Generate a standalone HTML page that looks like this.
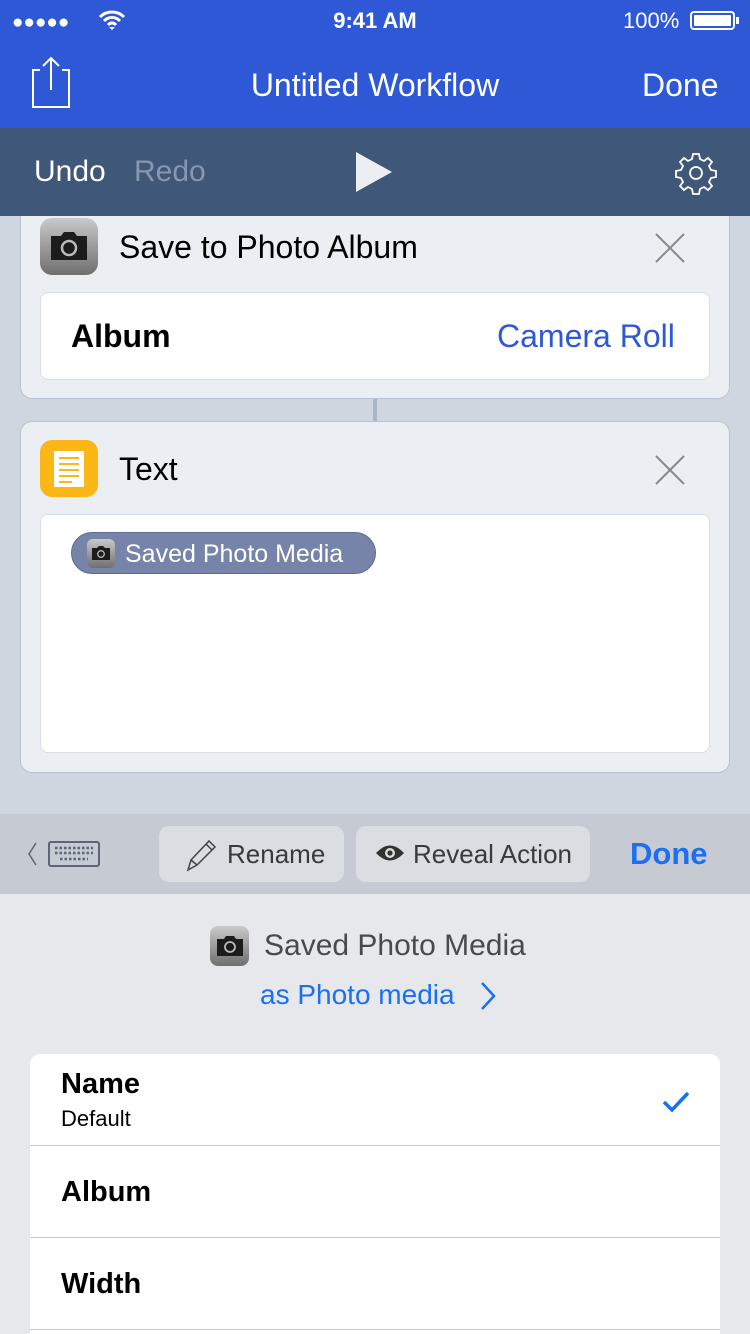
<!DOCTYPE html>
<html style="overflow:hidden;height:1334px"><head><meta charset="utf-8"><style>
*{margin:0;padding:0;box-sizing:border-box}
body{width:750px;height:1334px;overflow:hidden;font-family:"Liberation Sans",sans-serif;background:#cfd6e0;position:relative}
.a{position:absolute}
.camico{background:linear-gradient(#c9c9c9,#6f6f6f);border-radius:12px}
</style></head><body>
<div class="a" style="left:0;top:0;width:750px;height:128px;background:#2e58d6"></div>
<div class="a" style="left:12px;top:12px;color:#fff;font-size:19px;letter-spacing:0px">●●●●●</div>
<svg class="a" style="left:98px;top:10px" width="28" height="20" viewBox="0 0 28 20"><path d="M2 7a17 17 0 0 1 24 0M6 11a11 11 0 0 1 16 0M10 15a5 5 0 0 1 8 0" stroke="#fff" stroke-width="3" fill="none"/><path d="M11 17l3 3l3-3z" fill="#fff"/></svg>
<div class="a" style="left:0;width:750px;top:8px;text-align:center;color:#fff;font-size:22px;font-weight:bold">9:41 AM</div>
<div class="a" style="left:623px;top:8px;color:#fff;font-size:22px">100%</div>
<div class="a" style="left:690px;top:11px;width:45px;height:19px;border:2px solid #fff;border-radius:4px;padding:2px"><div style="background:#fff;width:100%;height:100%;border-radius:1px"></div></div>
<div class="a" style="left:736px;top:17px;width:3px;height:7px;background:#fff"></div>
<svg class="a" style="left:20px;top:55px" width="54" height="54" viewBox="0 0 54 54"><path d="M20 15H13V52H49V15H42M31 3V35M23 11L31 3L39 11" stroke="#fff" stroke-width="2" fill="none"/></svg>
<div class="a" style="left:0;width:750px;top:67px;text-align:center;color:#fff;font-size:32px">Untitled Workflow</div>
<div class="a" style="left:642px;top:67px;color:#fff;font-size:32px">Done</div>

<div class="a" style="left:20px;top:200px;width:710px;height:199px;background:#ebeef3;border:1px solid #b9c3d0;border-radius:12px"></div>
<div class="a" style="left:0;top:128px;width:750px;height:88px;background:#3f5779"></div>
<div class="a" style="left:34px;top:155px;color:#fff;font-size:30px">Undo</div>
<div class="a" style="left:134px;top:155px;color:#8797ae;font-size:30px">Redo</div>
<svg class="a" style="left:354px;top:150px" width="40" height="44"><path d="M2 2L38 22L2 42Z" fill="#eceef2"/></svg>
<svg class="a" style="left:674px;top:151px" width="44" height="44" viewBox="0 0 44 44"><path d="M19 3h6l1 5 4 2 4-3 4 4-3 4 2 4 5 1v6l-5 1-2 4 3 4-4 4-4-3-4 2-1 5h-6l-1-5-4-2-4 3-4-4 3-4-2-4-5-1v-6l5-1 2-4-3-4 4-4 4 3 4-2z" stroke="#fff" stroke-width="1.8" fill="none"/><circle cx="22" cy="22" r="6" stroke="#fff" stroke-width="1.8" fill="none"/></svg>

<div class="a camico" style="left:40px;top:218px;width:58px;height:57px"></div>
<svg class="a" style="left:48px;top:230px" width="42" height="32"><path d="M3 6h10l3-4h10l3 4h10v24H3z" fill="#1c1c1c"/><circle cx="21" cy="18" r="7" stroke="#bbb" stroke-width="2.5" fill="none"/></svg>
<div class="a" style="left:119px;top:229px;font-size:32px;color:#000">Save to Photo Album</div>
<svg class="a" style="left:652px;top:230px" width="36" height="36"><path d="M4 4L32 32M32 4L4 32" stroke="#8a8a8a" stroke-width="2"/></svg>
<div class="a" style="left:40px;top:292px;width:670px;height:88px;background:#fff;border:1px solid #d8dee6;border-radius:8px"></div>
<div class="a" style="left:71px;top:318px;font-size:32px;font-weight:bold">Album</div>
<div class="a" style="left:497px;top:318px;font-size:32px;color:#2e58d6">Camera Roll</div>
<div class="a" style="left:373px;top:399px;width:4px;height:22px;background:#a8b6c6"></div>

<div class="a" style="left:20px;top:421px;width:710px;height:352px;background:#ebeef3;border:1px solid #b9c3d0;border-radius:12px"></div>
<div class="a" style="left:40px;top:440px;width:58px;height:57px;background:#fbb715;border-radius:12px"></div>
<div class="a" style="left:54px;top:451px;width:30px;height:36px;background:#fff"></div>
<svg class="a" style="left:57px;top:455px" width="24" height="30"><path d="M2 3h20M2 9h20M2 15h20M2 21h20M2 27h13" stroke="#fbb715" stroke-width="2"/></svg>
<div class="a" style="left:119px;top:451px;font-size:32px">Text</div>
<svg class="a" style="left:652px;top:452px" width="36" height="36"><path d="M4 4L32 32M32 4L4 32" stroke="#8a8a8a" stroke-width="2"/></svg>
<div class="a" style="left:40px;top:514px;width:670px;height:239px;background:#fff;border:1px solid #d8dee6;border-radius:8px"></div>
<div class="a" style="left:71px;top:532px;width:305px;height:42px;background:#7584a8;border:1px solid #5d6c90;border-radius:21px"></div>
<div class="a camico" style="left:87px;top:539px;width:28px;height:29px;border-radius:6px"></div>
<svg class="a" style="left:91px;top:545px" width="20" height="16"><path d="M1 3h5l2-2h4l2 2h5v12H1z" fill="#1c1c1c"/><circle cx="10" cy="9" r="3.3" stroke="#bbb" stroke-width="1.3" fill="none"/></svg>
<div class="a" style="left:125px;top:540px;font-size:25px;color:#fff">Saved Photo Media</div>

<div class="a" style="left:0;top:814px;width:750px;height:80px;background:#c5cad3"></div>
<svg class="a" style="left:26px;top:840px" width="76" height="30"><path d="M10 3L3 14L10 25" stroke="#5b6575" stroke-width="1.5" fill="none"/><rect x="23" y="2" width="50" height="24" rx="2" stroke="#5b6575" stroke-width="2" fill="none"/><path d="M29 8h38M29 13h38M34 19h28" stroke="#5b6575" stroke-width="2.5" stroke-dasharray="2.5 2"/></svg>
<div class="a" style="left:159px;top:826px;width:185px;height:56px;background:#dadde2;border-radius:10px"></div>
<svg class="a" style="left:184px;top:838px" width="34" height="34"><path d="M4 32L7 22L25 3L31 9L13 27Z M7 22L13 27 M22 6L28 12" stroke="#444" stroke-width="1.5" fill="none"/></svg>
<div class="a" style="left:227px;top:839px;font-size:26px;color:#3a3a3a">Rename</div>
<div class="a" style="left:356px;top:826px;width:234px;height:56px;background:#dadde2;border-radius:10px"></div>
<svg class="a" style="left:374px;top:842px" width="32" height="22"><path d="M2 11Q16 -4 30 11Q16 26 2 11Z" fill="#333"/><circle cx="16" cy="11" r="5" fill="#dadde2"/><circle cx="16" cy="11" r="2.6" fill="#333"/></svg>
<div class="a" style="left:413px;top:839px;font-size:26px;color:#3a3a3a">Reveal Action</div>
<div class="a" style="left:630px;top:836px;font-size:31px;font-weight:bold;color:#1a6ff2">Done</div>

<div class="a" style="left:0;top:894px;width:750px;height:440px;background:#e6e8ec"></div>
<div class="a camico" style="left:210px;top:926px;width:39px;height:40px;border-radius:8px"></div>
<svg class="a" style="left:215px;top:934px" width="30" height="24"><path d="M2 5h7l2-3h8l2 3h7v17H2z" fill="#1c1c1c"/><circle cx="15" cy="13" r="5" stroke="#bbb" stroke-width="1.8" fill="none"/></svg>
<div class="a" style="left:264px;top:929px;font-size:30px;color:#4a4a4a">Saved Photo Media</div>
<div class="a" style="left:260px;top:979px;font-size:28px;color:#1a6ff2">as Photo media</div>
<svg class="a" style="left:478px;top:981px" width="20" height="30"><path d="M4 2L16 15L4 28" stroke="#1a6ff2" stroke-width="2.5" fill="none"/></svg>

<div class="a" style="left:30px;top:1054px;width:690px;height:280px;background:#fff;border-radius:10px 10px 0 0"></div>
<div class="a" style="left:61px;top:1068px;font-size:29px;font-weight:bold">Name</div>
<div class="a" style="left:61px;top:1106px;font-size:22px">Default</div>
<svg class="a" style="left:661px;top:1090px" width="30" height="24"><path d="M3 12L11 20L27 3" stroke="#1a6ff2" stroke-width="3.5" fill="none"/></svg>
<div class="a" style="left:30px;top:1145px;width:690px;height:1px;background:#c8c8cc"></div>
<div class="a" style="left:61px;top:1176px;font-size:29px;font-weight:bold">Album</div>
<div class="a" style="left:30px;top:1237px;width:690px;height:1px;background:#c8c8cc"></div>
<div class="a" style="left:61px;top:1268px;font-size:29px;font-weight:bold">Width</div>
<div class="a" style="left:30px;top:1329px;width:690px;height:1px;background:#c8c8cc"></div>
</body></html>
